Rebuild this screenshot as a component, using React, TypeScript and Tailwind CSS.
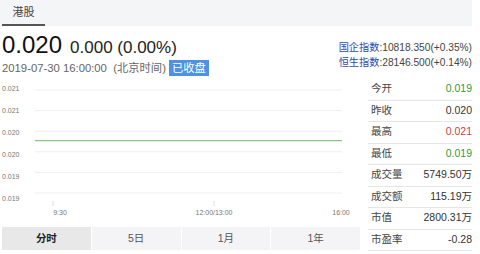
import React from "react";

const yLabels = ["0.021", "0.021", "0.020", "0.020", "0.019", "0.019"];
const stats: { k: string; v: string; c: string }[] = [
  { k: "今开", v: "0.019", c: "text-[#2f9a3c]" },
  { k: "昨收", v: "0.020", c: "text-[#333]" },
  { k: "最高", v: "0.021", c: "text-[#d33a3f]" },
  { k: "最低", v: "0.019", c: "text-[#2f9a3c]" },
  { k: "成交量", v: "5749.50万", c: "text-[#333]" },
  { k: "成交额", v: "115.19万", c: "text-[#333]" },
  { k: "市值", v: "2800.31万", c: "text-[#333]" },
  { k: "市盈率", v: "-0.28", c: "text-[#333]" },
];
const tabs = ["分时", "5日", "1月", "1年"];

export default function App() {
  const gridY = [11, 31.6, 52.2, 72.8, 93.4, 114];
  return (
    <div className="w-[480px] h-[254px] bg-white overflow-hidden font-['Liberation_Sans','Noto_Sans_CJK_SC',sans-serif] text-[#333]">
      {/* top bar */}
      <div className="h-[26px] w-[472px] bg-[#f4f5f7] flex">
        <div className="ml-[2px] w-[43px] h-[26px] border-b-2 border-[#555] flex items-center justify-center text-[11px] text-[#444]">
          港股
        </div>
      </div>

      {/* header */}
      <div className="h-[53px] w-[472px] flex justify-between">
        <div className="pl-[2px] pt-[7px]">
          <div className="flex items-baseline h-[24px] leading-[24px]">
            <span className="text-[24px] text-[#111]">0.020</span>
            <span className="text-[17px] text-[#222] ml-[8px]">0.000 (0.00%)</span>
          </div>
          <div className="mt-[3px] h-[16px] flex items-center text-[11.3px] text-[#666]">
            <span>2019-07-30 16:00:00&nbsp;&nbsp;(北京时间)</span>
            <span className="ml-[3px] h-[16px] px-[3px] bg-[#4d92e3] text-white flex items-center">已收盘</span>
          </div>
        </div>
        <div className="pt-[13.5px] text-[10.2px] text-right">
          <div className="h-[15px] leading-[15px]">
            <span className="text-[#3346ad]">国企指数</span>
            <span className="text-[#444]">:10818.350(+0.35%)</span>
          </div>
          <div className="h-[15px] leading-[15px]">
            <span className="text-[#3346ad]">恒生指数</span>
            <span className="text-[#444]">:28146.500(+0.14%)</span>
          </div>
        </div>
      </div>

      {/* main */}
      <div className="flex w-[472px]">
        <div className="w-[358px]">
          <div className="flex h-[148px]">
            <div className="w-[35px] pl-[2px] -mt-[1px] flex flex-col text-[7px] text-[#777]">
              {yLabels.map((l, i) => (
                <div key={i} className="h-[22px] leading-[22px]">
                  {l}
                </div>
              ))}
            </div>
            <div className="relative w-[323px] h-[148px]">
              <svg width="323" height="148" className="absolute left-0 top-0">
                {gridY.map((y, i) => (
                  <line key={i} x1="0" x2="307" y1={y} y2={y} stroke="#eeeeee" strokeWidth="1" />
                ))}
                <line x1="0" x2="307" y1="61.7" y2="61.7" stroke="#86c986" strokeWidth="1.2" />
                <line x1="18" x2="18" y1="122" y2="127" stroke="#dddddd" strokeWidth="1" />
                <line x1="179" x2="179" y1="122" y2="127" stroke="#dddddd" strokeWidth="1" />
              </svg>
              <div className="absolute left-0 top-[129px] w-full h-[10px] text-[7px] text-[#777] leading-[10px]">
                <span className="absolute left-[25px] -translate-x-1/2">9:30</span>
                <span className="absolute left-[179px] -translate-x-1/2">12:00/13:00</span>
                <span className="absolute left-[306px] -translate-x-1/2">16:00</span>
              </div>
            </div>
          </div>
          <div className="ml-[2px] w-[358px] h-[23px] flex gap-[1px]">
            {tabs.map((t, i) => (
              <div
                key={t}
                className={
                  i === 0
                    ? "flex-1 bg-[#e8e8e8] flex items-center justify-center text-[10.5px] font-bold text-[#222]"
                    : "flex-1 bg-[#f4f4f6] flex items-center justify-center text-[10.5px] text-[#555]"
                }
              >
                {t}
              </div>
            ))}
          </div>
        </div>
        <div className="w-[114px] pl-[10px]">
          {stats.map((s) => (
            <div
              key={s.k}
              className="h-[21.5px] border-b border-[#e6e6e6] pl-[3px] flex items-center justify-between text-[10.5px]"
            >
              <span className="text-[#444]">{s.k}</span>
              <span className={s.c}>{s.v}</span>
            </div>
          ))}
        </div>
      </div>
    </div>
  );
}
